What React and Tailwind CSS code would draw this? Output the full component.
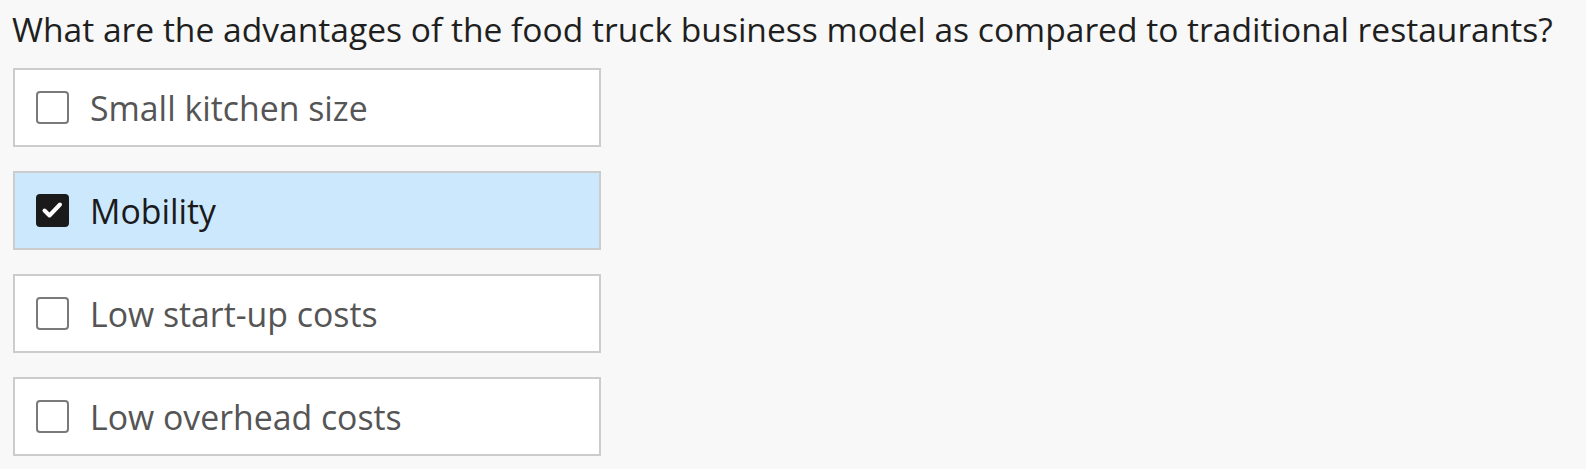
import { useState } from "react";

const options = [
  { id: "kitchen", label: "Small kitchen size" },
  { id: "mobility", label: "Mobility" },
  { id: "startup", label: "Low start-up costs" },
  { id: "overhead", label: "Low overhead costs" },
];

const CheckBox = ({ checked }) => (
  <span
    className={`flex items-center justify-center w-[33px] h-[33px] rounded-[4px] border-2 shrink-0 ${
      checked ? "bg-[#1a1a1a] border-[#1a1a1a]" : "bg-white border-[#7a7a7a]"
    }`}
  >
    {checked && (
      <svg width="29" height="29" viewBox="0 0 29 29" fill="none">
        <path d="M6.5 14.5l5 5 10.5-11" stroke="white" strokeWidth="4" strokeLinecap="round" strokeLinejoin="round" />
      </svg>
    )}
  </span>
);

export default function App() {
  const [selected, setSelected] = useState(["mobility"]);

  const toggle = (id) =>
    setSelected((prev) => (prev.includes(id) ? prev.filter((x) => x !== id) : [...prev, id]));

  return (
    <div className="min-h-screen bg-[#f8f8f8] px-[13px] pt-[6px] font-['Open_Sans',sans-serif]">
      <h1 className="-ml-[1px] text-[33.6px] leading-[46px] text-[#1f1f1f] font-normal whitespace-nowrap">
        What are the advantages of the food truck business model as compared to traditional restaurants?
      </h1>
      <div className="mt-[16px] flex flex-col gap-[24px] w-[588px]">
        {options.map((opt) => {
          const checked = selected.includes(opt.id);
          return (
            <button
              key={opt.id}
              onClick={() => toggle(opt.id)}
              className={`flex items-center gap-[21px] h-[79px] px-[21px] border-2 border-[#cccccc] text-left ${
                checked ? "bg-[#cce8fd] text-[#1a1a1a]" : "bg-white text-[#555]"
              }`}
            >
              <CheckBox checked={checked} />
              <span className="text-[33.8px] leading-[44px]">{opt.label}</span>
            </button>
          );
        })}
      </div>
    </div>
  );
}
